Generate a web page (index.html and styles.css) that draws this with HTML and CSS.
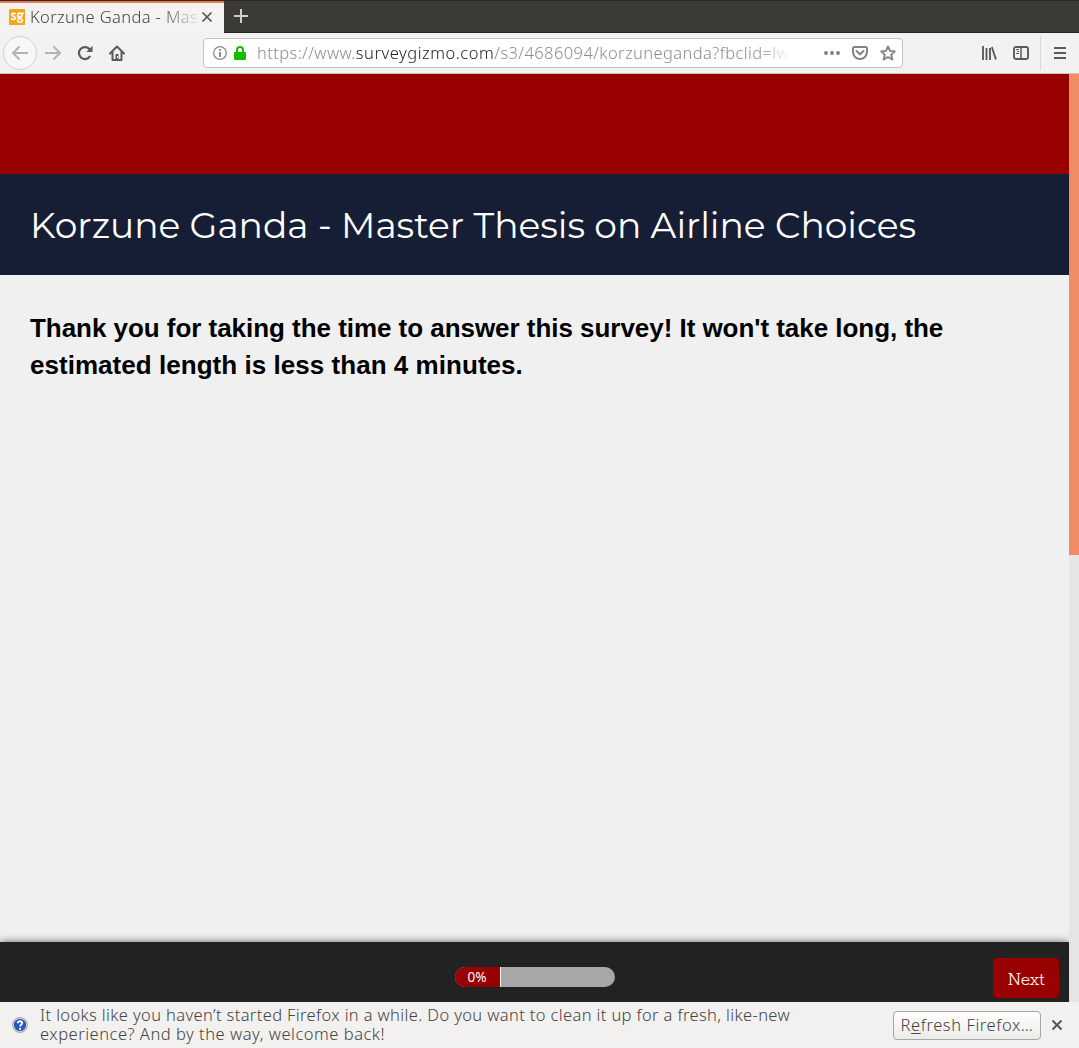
FILE: index.html
```html
<!DOCTYPE html>
<html lang="en">
<head>
<meta charset="utf-8">
<title>Korzune Ganda - Master Thesis on Airline Choices</title>
<link rel="stylesheet" href="styles.css">
</head>
<body>
<div class="browser">
  <div class="tabs">
    <div class="tab">
      <svg class="favicon" width="16" height="16" viewBox="0 0 16 16"><rect width="16" height="16" fill="#f8a51b"/><g fill="none" stroke="#fff" stroke-width="1.700"><path d="M6.600 4.900C5.300 4 2.700 4.100 2.700 5.700c0 1.800 3.700 1.200 3.700 3.200 0 1.800-2.700 1.800-4.300.900"/><circle cx="10.800" cy="6.200" r="2"/><path d="M12.300 5 14.500 4M9.600 8c-1.500 1.500 0 1.800 1.800 1.900 3 .200 2.700 3.300-.600 3.300-3 0-3-2.100-1-2.900" stroke-width="1.400"/></g></svg>
      <span class="tab-title">Korzune Ganda - Mas</span>
      <svg class="tab-close" width="12" height="12" viewBox="0 0 12 12"><path d="M1.500 1.500 10.500 10.500M10.500 1.500 1.500 10.500" stroke="#555552" stroke-width="1.700"/></svg>
    </div>
    <svg class="new-tab" width="16" height="16" viewBox="0 0 16 16"><path d="M8 1v14M1 8h14" stroke="#d0cec9" stroke-width="2"/></svg>
  </div>
  <div class="toolbar">
    <div class="back"><svg width="18" height="16" viewBox="0 0 18 16"><path d="M17 8H2M8.500 1.500 2 8l6.500 6.500" fill="none" stroke="#b4b3b1" stroke-width="2"/></svg></div>
    <svg class="forward" width="18" height="16" viewBox="0 0 18 16"><path d="M1 8h15M9.500 1.500 16 8l-6.500 6.500" fill="none" stroke="#b4b3b1" stroke-width="2"/></svg>
    <svg class="reload" width="16" height="16" viewBox="0 0 16 16"><path d="M12.800 4.500A6 6 0 1 0 13.200 11" fill="none" stroke="#5b5b58" stroke-width="2.200"/><path d="M15.500.800V7H9.300z" fill="#5b5b58"/></svg>
    <svg class="home" width="16" height="16" viewBox="0 0 16 16"><path d="M1 8.500 8 1.500l7 7M3.500 7.500V15h9V7.500" fill="none" stroke="#5b5b58" stroke-width="2" stroke-linejoin="round" stroke-linecap="round"/><path d="M6.500 9h3v6h-3z" fill="#5b5b58"/><path d="M8.500 11v2" stroke="#f3f2f0"/></svg>
    <div class="urlbar">
      <svg width="14" height="14" viewBox="0 0 14 14"><circle cx="7" cy="7" r="6.300" fill="none" stroke="#8c8c8a" stroke-width="1.300"/><path d="M7 3v1.800M7 6v5" stroke="#8c8c8a" stroke-width="2"/></svg>
      <svg class="lock" width="12" height="14" viewBox="0 0 12 14"><rect y="6" width="12" height="8" rx="1" fill="#12bc00"/><path d="M3 7V4a3 3 0 0 1 6 0v3" fill="none" stroke="#12bc00" stroke-width="2"/></svg>
      <div class="url"><span class="url-scheme">https://www.</span><span class="url-host">surveygizmo.com</span><span class="url-path">/s3/4686094/korzuneganda?fbclid=lw</span></div>
      <svg class="dots" width="16" height="16" viewBox="0 0 16 16" fill="#83827f"><circle cx="2" cy="8" r="2"/><circle cx="8" cy="8" r="2"/><circle cx="14" cy="8" r="2"/></svg>
      <svg class="pocket" width="16" height="14" viewBox="0 0 16 14"><path d="M2.500 1h11Q15 1 15 2.500V6a7 7 0 0 1-14 0V2.500Q1 1 2.500 1z" fill="none" stroke="#83827f" stroke-width="2"/><path d="M4.500 5 8 8.300 11.500 5" fill="none" stroke="#83827f" stroke-width="2" stroke-linecap="round"/></svg>
      <svg class="star" width="16" height="16" viewBox="0 0 16 16"><path d="M8 1.500 10 5.900l4.800.500-3.600 3.200 1.100 4.900L8 12l-4.300 2.500 1.100-4.900L1.200 6.400 6 5.900z" fill="none" stroke="#83827f" stroke-width="1.900" stroke-linejoin="round"/></svg>
    </div>
    <svg class="library" width="16" height="16" viewBox="0 0 16 16"><path d="M2 1v14M5.500 3v12M9 3v12M10.800 2l4.200 12.500" fill="none" stroke="#5b5b58" stroke-width="1.900"/></svg>
    <svg class="sidebar-icon" width="16" height="14" viewBox="0 0 16 14"><rect x="1" y="1" width="14" height="12" rx="2" fill="none" stroke="#5b5b58" stroke-width="1.900"/><path d="M8 1v12" stroke="#5b5b58" stroke-width="1.500"/><path d="M3 3.500h3M4 5.500h2M3 7.500h3" stroke="#5b5b58"/></svg>
    <div class="menu"><svg width="12" height="14" viewBox="0 0 12 14"><path d="M0 2h12M0 7h12M0 12h12" stroke="#5b5b58" stroke-width="2"/></svg></div>
  </div>
  <div class="viewport">
    <main class="page">
      <div class="banner"></div>
      <header class="survey-header"><h1>Korzune Ganda - Master Thesis on Airline Choices</h1></header>
      <section class="survey-body"><h2><span class="intro-first">Thank you for taking the time to answer this survey! It won't take long, the</span><br><span class="intro-second">estimated length is less than 4 minutes.</span></h2></section>
      <footer class="survey-footer">
        <div class="progress"><div class="progress-value">0%</div></div>
        <button class="next">Next</button>
      </footer>
    </main>
    <div class="scrollbar"><div class="thumb"></div></div>
  </div>
  <div class="notice">
    <svg class="help" width="16" height="16" viewBox="0 0 16 16"><circle cx="8" cy="8" r="7.400" fill="#f4f4f4" stroke="#999" stroke-width="1"/><circle cx="8" cy="8" r="6.200" fill="#2559bd"/><path d="M5.800 6.200C6 3.500 10.400 3.700 10.200 6.200 10.100 7.600 8.100 7.600 8.100 9.500" fill="none" stroke="#fff" stroke-width="1.800"/><circle cx="8.100" cy="11.900" r="1.100" fill="#fff"/></svg>
    <div class="notice-text"><div class="notice-first">It looks like you haven’t started Firefox in a while. Do you want to clean it up for a fresh, like-new</div><div class="notice-second">experience? And by the way, welcome back!</div></div>
    <button class="refresh">R<u>e</u>fresh Firefox…</button>
    <svg class="notice-close" width="12" height="12" viewBox="0 0 12 12"><path d="M1.500 1.500 10.500 10.500M10.500 1.500 1.500 10.500" stroke="#555552" stroke-width="1.900"/></svg>
  </div>
</div>
</body>
</html>
```
FILE: styles.css
```css
* { box-sizing: border-box; }
body { margin: 0; font-family: "Noto Sans", "Open Sans", sans-serif; font-weight: 300; font-size: 16.5px; color: #444; }
svg { display: block; flex: none; }
.browser { width: 1079px; height: 1048px; display: flex; flex-direction: column; overflow: hidden; }

.tabs { height: 33px; flex: none; display: flex; background: #3c3b37; border-top: 1px solid #292825; border-bottom: 1px solid #252522; }
.tab { width: 224px; height: 33px; flex: none; display: flex; align-items: center; padding: 0 11px 3px 9px; background: #f4f3f1; border-top: 2px solid #ec7a52; }
.tab-title { width: 166px; margin: 0 5px; height: 24px; line-height: 24px; letter-spacing: .38px; white-space: nowrap; overflow: hidden; -webkit-mask-image: linear-gradient(90deg, #000 130px, transparent 172px); mask-image: linear-gradient(90deg, #000 130px, transparent 172px); }
.new-tab { margin: 7px 0 0 9px; }

.toolbar { height: 41px; flex: none; display: flex; align-items: center; background: #f3f2f0; border-bottom: 1px solid #c9c7c4; }
.back { width: 34px; height: 34px; margin-left: 3px; border: 1px solid #d0cfcc; border-radius: 50%; background: #f8f7f6; display: flex; align-items: center; justify-content: center; }
.forward { margin-left: 7px; }
.reload { margin-left: 15px; }
.home { margin-left: 16px; }
.urlbar { width: 700px; height: 30px; margin-left: 78px; display: flex; align-items: center; padding: 0 6px 0 9px; background: #fff; border: 1px solid #c4c2bf; border-radius: 4px; }
.lock { margin-left: 7px; }
.url { width: 540px; margin-left: 11px; height: 26px; line-height: 26px; letter-spacing: .4px; white-space: nowrap; overflow: hidden; color: #8c8c8a; -webkit-mask-image: linear-gradient(90deg, #000 500px, transparent 533px); mask-image: linear-gradient(90deg, #000 500px, transparent 533px); }
.url-host { color: #222; letter-spacing: .53px; }
.dots { margin-left: 27px; }
.pocket, .star { margin-left: 12px; }
.library { margin-left: 78px; }
.sidebar-icon { margin-left: 16px; }
.menu { height: 34px; margin-left: 11px; padding-left: 13px; border-left: 1px solid #dad8d5; display: flex; align-items: center; }

.viewport { height: 928px; flex: none; display: flex; }
.page { width: 1069px; display: flex; flex-direction: column; background: #f0f0f0; }
.banner { height: 100px; background: #990000; }
.survey-header { height: 101px; padding: 27px 30px 0; background: #161e35; }
h1 { margin: 0; font-family: "Montserrat", "Inter", sans-serif; font-weight: 380; font-size: 36px; line-height: 48px; letter-spacing: -.03px; color: #fff; white-space: nowrap; }
.survey-body { flex: 1; padding: 35px 30px 0; }
h2 { margin: 0; font-family: "Liberation Sans", sans-serif; font-weight: 700; font-size: 26px; line-height: 37px; color: #000; white-space: nowrap; }
.intro-first { letter-spacing: -.04px; }
.intro-second { letter-spacing: .04px; }
.survey-footer { height: 60px; display: flex; justify-content: flex-end; align-items: flex-start; background: #222; box-shadow: 0 0 8px rgba(0, 0, 0, .6); clip-path: inset(-12px 0 0 0); }
.progress { width: 160px; height: 20px; margin: 25px 378px 0 0; border-radius: 10px; background: #a7a7a7; overflow: hidden; }
.progress-value { width: 46px; height: 20px; padding-right: 1px; background: #990000; border-right: 1px solid #fff; color: #fff; font-size: 13.500px; font-weight: 400; line-height: 20px; text-align: center; }
.next { width: 66px; height: 40px; margin: 16px 10px 0 0; padding: 4px 0 0; border: 0; border-radius: 4px; background: #990000; color: #fff; font: 300 19px/20px "Rokkitt", "Roboto Slab", "DejaVu Serif", serif; letter-spacing: -.3px; }
.scrollbar { width: 10px; background: #e5e5e5; }
.thumb { height: 481px; background: #f18c65; }

.notice { height: 46px; flex: none; display: flex; align-items: center; padding: 0 16px 0 12px; background: #f2f1ef; }
.notice-text { width: 853px; padding: 0 0 2px 12px; line-height: 19px; white-space: nowrap; }
.notice-first { letter-spacing: .37px; }
.notice-second { letter-spacing: .52px; }
.refresh { width: 148px; height: 29px; margin-left: 12px; padding: 0 0 2px; border: 1px solid #a5a5a2; border-radius: 4px; background: linear-gradient(#fefefe, #ececea); color: #444; font: 300 16.5px/25px "Noto Sans", "Open Sans", sans-serif; letter-spacing: .58px; white-space: nowrap; }
.refresh u { text-underline-offset: 2px; }
.notice-close { margin-left: 10px; }
```
